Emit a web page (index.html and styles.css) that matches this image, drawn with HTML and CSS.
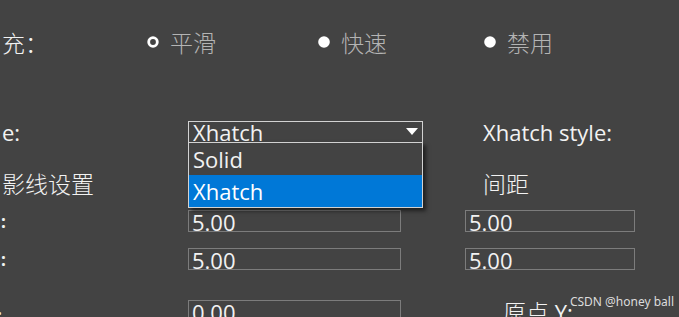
FILE: index.html
```html
<!DOCTYPE html>
<html lang="zh">
<head>
<meta charset="utf-8">
<title>Hatch settings</title>
<link rel="stylesheet" href="styles.css">
</head>
<body>
<div class="dialog">
  <div class="row-radio">
    <div class="lbl cjk">充：</div>
    <div class="opt opt1">
      <svg class="radio" width="12" height="12" viewBox="0 0 12 12"><circle cx="6" cy="6" r="4.3" fill="none" stroke="#ffffff" stroke-width="2.8"/></svg>
      <span class="opt-text cjk">平滑</span>
    </div>
    <div class="opt opt2">
      <svg class="radio" width="12" height="12" viewBox="0 0 12 12"><circle cx="6" cy="6" r="5.8" fill="#ffffff"/></svg>
      <span class="opt-text cjk">快速</span>
    </div>
    <div class="opt opt3">
      <svg class="radio" width="12" height="12" viewBox="0 0 12 12"><circle cx="6" cy="6" r="5.8" fill="#ffffff"/></svg>
      <span class="opt-text cjk">禁用</span>
    </div>
  </div>

  <div class="grid row-type">
    <div class="lbl">e:</div>
    <div class="combo">
      <div class="combo-head">
        <span class="combo-value">Xhatch</span>
        <svg class="arrow" width="12" height="7" viewBox="0 0 12 7"><polygon points="0,0 12,0 6,7" fill="#ffffff"/></svg>
      </div>
      <div class="combo-list">
        <div class="item">Solid</div>
        <div class="item selected">Xhatch</div>
      </div>
    </div>
    <div class="rlbl">Xhatch style:</div>
  </div>

  <div class="grid row-section">
    <div class="lbl cjk">影线设置</div>
    <div></div>
    <div class="rlbl cjk">间距</div>
  </div>

  <div class="grid row-field r4">
    <div class="lbl colon">:</div>
    <div class="field"><span>5.00</span></div>
    <div class="field right"><span>5.00</span></div>
  </div>

  <div class="grid row-field r5">
    <div class="lbl colon">:</div>
    <div class="field"><span>5.00</span></div>
    <div class="field right"><span>5.00</span></div>
  </div>

  <div class="grid row-field r6">
    <div class="lbl colon cut">:</div>
    <div class="field"><span>0.00</span></div>
    <div class="rlbl origin"><span class="cjk">原点</span> Y:</div>
  </div>
</div>
<div class="watermark">CSDN @honey ball</div>
</body>
</html>
```

FILE: styles.css
```css
html, body {
  margin: 0;
  padding: 0;
  background: #434343;
  overflow: hidden;
}

body {
  width: 679px;
  height: 317px;
  position: relative;
  font-family: "Open Sans", "Noto Sans CJK SC", sans-serif;
  font-size: 22px;
  color: #f2f2f2;
}

.dialog {
  padding-top: 28px;
}

.cjk {
  font-family: "Noto Sans CJK SC", sans-serif;
  font-size: 23px;
  font-weight: 300;
}

.lbl {
  padding-left: 2px;
  white-space: nowrap;
}

/* radio row */
.row-radio {
  display: flex;
  align-items: center;
  height: 28px;
  line-height: 28px;
}
.row-radio .lbl {
  width: 145px;
}
.opt {
  display: flex;
  align-items: center;
  gap: 11px;
}
.opt1 { width: 171px; }
.opt2 { width: 166px; }
.radio {
  display: block;
  flex: none;
}
.opt-text {
  color: #b4b4b4;
}

/* grid rows */
.grid {
  display: grid;
  grid-template-columns: 188px 277px 1fr;
}

.rlbl {
  padding-left: 18px;
  white-space: nowrap;
}

.row-type {
  margin-top: 65px;
  height: 22px;
  line-height: 20px;
}
.row-type .lbl,
.row-type .rlbl {
  padding-top: 1px;
}

.combo {
  position: relative;
  width: 235px;
}
.combo-head {
  box-sizing: border-box;
  height: 22px;
  border: 1px solid #d2d2d2;
  display: flex;
  align-items: flex-start;
  justify-content: space-between;
  padding-left: 4px;
  padding-right: 4px;
  overflow: hidden;
}
.combo-value {
  display: block;
  height: 20px;
  line-height: 20px;
  overflow: hidden;
}
.arrow {
  display: block;
  margin-top: 6px;
  flex: none;
}
.combo-list {
  position: absolute;
  left: 0;
  top: 21px;
  width: 235px;
  box-sizing: border-box;
  border: 1px solid #d2d2d2;
  background: #434343;
  box-shadow: 3px 3px 4px rgba(0, 0, 0, 0.55);
  z-index: 2;
}
.item {
  height: 32px;
  line-height: 32px;
  padding-left: 4px;
}
.item.selected {
  background: #0078d7;
  color: #ffffff;
}

.row-section {
  margin-top: 25px;
  height: 30px;
  line-height: 30px;
}

.row-field {
  height: 22px;
}
.r4 { margin-top: 12px; }
.r5 { margin-top: 16px; }
.r6 { margin-top: 30px; }

.field {
  box-sizing: border-box;
  width: 213px;
  height: 22px;
  border: 1px solid #7c7c7c;
  padding-left: 3px;
  line-height: 23px;
  overflow: hidden;
}
.field.right {
  width: 170px;
}

.colon {
  font-size: 17px;
  font-weight: 700;
  line-height: 17px;
  padding-top: 3px;
  padding-left: 1px;
}
.colon.cut {
  margin-left: -4px;
  padding-top: 7px;
}

.origin {
  padding-left: 38px;
  line-height: 22px;
}

.watermark {
  position: absolute;
  right: 5px;
  top: 293px;
  font-family: "Noto Sans", sans-serif;
  font-size: 12px;
  color: #dcdcdc;
  white-space: nowrap;
}
```
